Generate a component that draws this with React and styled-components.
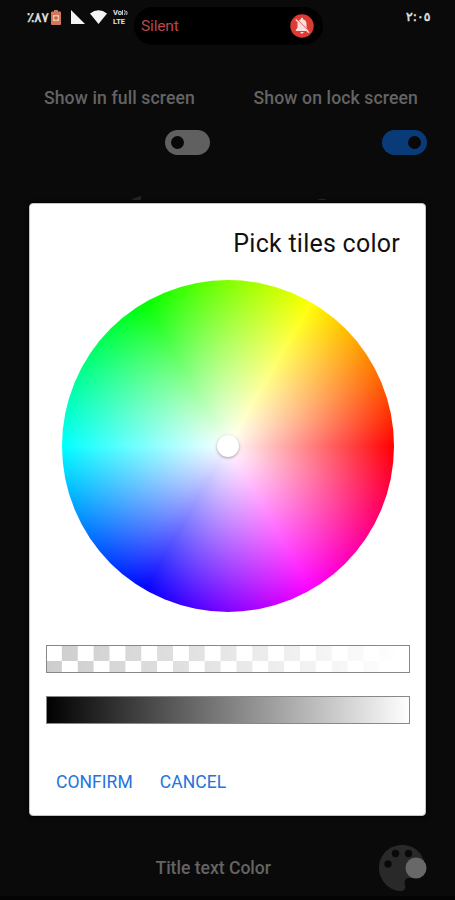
import { useState } from "react";
import styled, { createGlobalStyle } from "styled-components";

const GlobalStyle = createGlobalStyle`
  * {
    box-sizing: border-box;
  }
  body {
    margin: 0;
    background: #0a0a0a;
    font-family: Roboto, "Liberation Sans", sans-serif;
  }
`
const Screen = styled.div`
  position: relative;
  display: flex;
  flex-direction: column;
  width: 455px;
  height: 900px;
  overflow: hidden;
  background: #0a0a0a;
  border-bottom: 4px solid #040404;
`
const StatusBar = styled.header`
  display: flex;
  align-items: flex-start;
  height: 50px;
  padding: 7px 26px 0 27px;
  color: #e2e2e2;
`
const StatusIcons = styled.div`
  display: flex;
  align-items: center;
  width: 107px;
  height: 20px;
`
const Digits = styled.span`
  width: ${(props) => props.$width};
  font-family: "DejaVu Sans", sans-serif;
  font-size: ${(props) => props.$size};
  line-height: 20px;
  letter-spacing: ${(props) => props.$spacing};
  white-space: nowrap;
  direction: ltr;
  unicode-bidi: bidi-override;
  -webkit-text-stroke: 0.5px #e2e2e2;
`
const Network = styled.span`
  display: flex;
  flex-direction: column;
  margin-left: 6px;
  font-size: 7.5px;
  font-weight: 700;
  line-height: 9px;
`
const NetworkLine = styled.span`
  display: flex;
  align-items: center;
  height: 9px;
`
const Island = styled.div`
  display: flex;
  align-items: center;
  justify-content: space-between;
  width: 189px;
  height: 38px;
  padding: 0 9px 0 7px;
  border-radius: 19px;
  background: #000;
  color: #b9474c;
  font-size: 15.5px;
  letter-spacing: -0.15px;
`
const Clock = styled.div`
  display: flex;
  margin-left: auto;
`
const Options = styled.main`
  display: flex;
  justify-content: space-between;
  padding: 37px 28px 0 36px;
`
const Option = styled.section`
  display: flex;
  flex-direction: column;
  align-items: flex-end;
  gap: 21px;
  width: ${(props) => props.$width};
`
const OptionTitle = styled.h2`
  margin: 0;
  padding-right: ${(props) => props.$end};
  color: #646464;
  font-size: 17.6px;
  font-weight: 500;
  line-height: 22px;
  letter-spacing: ${(props) => props.$spacing || "0.12px"};
  white-space: nowrap;
`
const Toggle = styled.button`
  display: flex;
  align-items: center;
  justify-content: ${(props) => (props.$on ? "flex-end" : "flex-start")};
  width: 45px;
  height: 25px;
  padding: 0 6px;
  border: none;
  border-radius: 13px;
  background: ${(props) => (props.$on ? "#083b78" : "#606060")};
`
const Knob = styled.span`
  width: 13px;
  height: 13px;
  border-radius: 50%;
  background: #080808;
`
const Peek = styled.div`
  display: flex;
  gap: 175px;
  padding: 40px 0 0 132px;
`
const ColorRow = styled.footer`
  display: flex;
  align-items: center;
  justify-content: flex-end;
  gap: 107px;
  height: 56px;
  margin-top: auto;
  padding-right: 27px;
`
const Dialog = styled.div`
  position: absolute;
  top: 203px;
  left: 29px;
  display: flex;
  flex-direction: column;
  width: 397px;
  height: 613px;
  padding: 25px 15px 18px 16px;
  border: 1px solid #c4c4c4;
  border-radius: 4px;
  background: #fff;
  box-shadow: 0 0 5px #000;
`
const DialogTitle = styled.h1`
  margin: 0;
  padding-right: 10px;
  color: #111;
  font-size: 25px;
  font-weight: 400;
  line-height: 30px;
  letter-spacing: 0.25px;
  text-align: right;
`
const Wheel = styled.div`
  display: flex;
  align-items: center;
  justify-content: center;
  align-self: center;
  width: 332px;
  height: 332px;
  margin-top: 21px;
  border-radius: 50%;
  background:
    radial-gradient(circle closest-side, #fff, rgba(255, 255, 255, 0)),
    conic-gradient(from 90deg, #f00, #f0f, #00f, #0ff, #0f0, #ff0, #f00);
`
const Picker = styled.span`
  width: 22px;
  height: 22px;
  border-radius: 50%;
  background: #fff;
  box-shadow: 0 1px 3px rgba(0, 0, 0, 0.35);
`
const Slider = styled.div`
  height: 28px;
  margin-top: ${(props) => props.$top};
  border: 1px solid #888;
  background: ${(props) => props.$fill};
  background-origin: border-box;
`
const Actions = styled.div`
  display: flex;
  gap: 27px;
  margin-top: 46px;
  padding-left: 10px;
`
const Action = styled.button`
  padding: 0;
  border: none;
  background: none;
  color: #2474e0;
  font-family: inherit;
  font-size: 17.5px;
  line-height: 24px;
  letter-spacing: 0.05px;
`

const alphaFill =
  "linear-gradient(90deg, rgba(255,255,255,0) 0%, #fff 97%), conic-gradient(#cdcdcd 25%, #fff 0 50%, #cdcdcd 0 75%, #fff 0) 0 0 / 31.75px 32px"
const shadeFill = "linear-gradient(90deg, #000, #fff)"

function Battery() {
  return (
    <svg width="10" height="17" viewBox="0 0 10 17">
      <path d="M3 1h4v1.500h2q1 0 1 1V15q0 1-1 1H1q-1 0-1-1V3.500q0-1 1-1h2z" fill="#cf785b" />
      <path d="M2 6h6v6H2z" fill="#efc2ae" />
      <path d="M4.300 7h1.400v4H4.300zM3 8.300h4v1.400H3z" fill="#c85f40" />
    </svg>
  )
}

function Signal() {
  return (
    <svg width="36" height="16" viewBox="0 0 36 16" style={{ marginLeft: 10 }}>
      <path d="M0 1v14h14z" fill="#f4f4f4" />
      <path d="M19 4.500q8.500-6.500 17 0L27.500 15z" fill="#f4f4f4" />
    </svg>
  )
}

function Waves() {
  return (
    <svg width="6" height="7" viewBox="0 0 6 7">
      <path d="M.5 1v5M2.500 1q1.500 2.500 0 5M4.500 2q1.200 2 0 4" fill="none" stroke="#d6d6d6" strokeWidth=".9" />
    </svg>
  )
}

function MutedBell() {
  return (
    <svg width="24" height="24" viewBox="0 0 24 24">
      <circle cx="12" cy="12" r="11.700" fill="#df3a35" />
      <path d="M5.800 17v-1.300l1.700-2V10q0-3.800 3.300-4.600V5q0-1.200 1.200-1.200T13.200 5v.4q3.300.8 3.300 4.600v3.700l1.700 2V17zm4.500 1h3.400q-.3 1.800-1.700 1.800T10.300 18z" fill="#f9dedb" />
      <path d="M6.700 5.100l13.300 13.300" stroke="#df3a35" strokeWidth="1" />
      <path d="M5.700 5.500l13.300 13.300" stroke="#f9dedb" strokeWidth="1.300" />
    </svg>
  )
}

function Palette() {
  return (
    <svg width="50" height="48" viewBox="0 0 50 48">
      <path d="M24.500 1C10.500 1 1 11.500 1 24s10.500 23 22 23c3.500 0 5-2.700 4-6-.9-3-.5-7 4-7h6c6 0 10-4 10-10C47 10.500 37 1 24.500 1z" fill="#292929" />
      <circle cx="10" cy="20" r="3.700" fill="#090909" />
      <circle cx="17.500" cy="9.500" r="3.700" fill="#090909" />
      <circle cx="30.500" cy="9.500" r="3.700" fill="#090909" />
      <circle cx="38" cy="24" r="10.500" fill="#686868" />
    </svg>
  )
}

function App() {
  const [fullScreen, setFullScreen] = useState(false)
  const [lockScreen, setLockScreen] = useState(true)

  return (
    <Screen>
      <GlobalStyle />
      <StatusBar>
        <StatusIcons>
          <Digits $width="24px" $size="13.5px" $spacing="0">٪٨٧</Digits>
          <Battery />
          <Signal />
          <Network>
            <NetworkLine>Vo<Waves /></NetworkLine>
            <NetworkLine>LTE</NetworkLine>
          </Network>
        </StatusIcons>
        <Island>
          <span>Silent</span>
          <MutedBell />
        </Island>
        <Clock>
          <Digits $width="23px" $size="12.5px" $spacing="-1px">٢:٠٥</Digits>
        </Clock>
      </StatusBar>
      <Options>
        <Option $width="174px">
          <OptionTitle $end="15px">Show in full screen</OptionTitle>
          <Toggle $on={fullScreen} onClick={() => setFullScreen(!fullScreen)}>
            <Knob />
          </Toggle>
        </Option>
        <Option $width="190px">
          <OptionTitle $end="9px">Show on lock screen</OptionTitle>
          <Toggle $on={lockScreen} onClick={() => setLockScreen(!lockScreen)}>
            <Knob />
          </Toggle>
        </Option>
      </Options>
      <Peek>
        <svg width="10" height="5" viewBox="0 0 10 5">
          <path d="M0 4l9-3v4H1z" fill="#262626" />
        </svg>
        <svg width="10" height="5" viewBox="0 0 10 5">
          <path d="M0 5q5-3 10 0z" fill="#262626" />
        </svg>
      </Peek>
      <ColorRow>
        <OptionTitle $end="0" $spacing="-0.02px">Title text Color</OptionTitle>
        <Palette />
      </ColorRow>
      <Dialog>
        <DialogTitle>Pick tiles color</DialogTitle>
        <Wheel>
          <Picker />
        </Wheel>
        <Slider $top="33px" $fill={alphaFill} />
        <Slider $top="23px" $fill={shadeFill} />
        <Actions>
          <Action>CONFIRM</Action>
          <Action>CANCEL</Action>
        </Actions>
      </Dialog>
    </Screen>
  )
}

export default App;
